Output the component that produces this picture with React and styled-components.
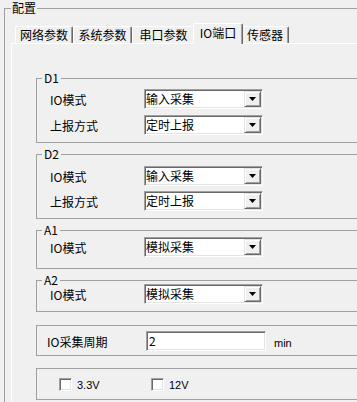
import styled, { createGlobalStyle } from "styled-components";

const GlobalStyle = createGlobalStyle`
  html, body {
    margin: 0;
    padding: 0;
    background: #f0f0f0;
    overflow: hidden;
  }

  body {
    font-family: "Noto Sans CJK SC", "Liberation Sans", sans-serif;
    font-size: 12px;
    color: #000;
  }
`;

const Window = styled.div`
  box-sizing: border-box;
  width: 357px;
  height: 402px;
  padding-left: 4px;
  overflow: hidden;
`;

const Frame = styled.fieldset`
  box-sizing: border-box;
  margin: 0;
  padding: 7px 0 0 6px;
  min-width: 0;
  height: 402px;
  border: 1px solid #a0a0a0;
  border-right: none;
  border-bottom: none;
  display: flex;
  flex-direction: column;
`;

const FrameTitle = styled.legend`
  padding: 0 1px;
  font-size: 12px;
  line-height: 16px;
`;

const TabStrip = styled.div`
  display: flex;
  align-items: flex-end;
  height: 20px;
  margin-left: 4px;
  position: relative;
  z-index: 1;
`;

const Tab = styled.div`
  box-sizing: border-box;
  flex: none;
  width: ${(p) => p.$w}px;
  height: ${(p) => (p.$active ? 21 : 17)}px;
  margin: ${(p) => (p.$active ? "0 -2px -1px" : "0")};
  position: relative;
  z-index: ${(p) => (p.$active ? 2 : 1)};
  background: #f0f0f0;
  border-top: 1px solid #fff;
  border-left: 1px solid #fff;
  border-right: 1px solid #696969;
  border-radius: 2px 2px 0 0;
  box-shadow: inset -1px 0 0 #a0a0a0;
  text-align: center;
  line-height: ${(p) => (p.$active ? 18 : 15)}px;
  white-space: nowrap;
`;

const Panel = styled.div`
  flex: 1;
  border-top: 1px solid #fff;
  border-left: 1px solid #fff;
  padding: 27px 0 0 24px;
`;

const Group = styled.fieldset`
  margin: ${(p) => p.$gap || 0}px 0 0;
  padding: 0;
  min-width: 0;
  border: 1px solid #a0a0a0;
  border-right: none;
`;

const GroupTitle = styled.legend`
  margin-left: 5px;
  padding: 0 2px;
  font-size: 12px;
  line-height: 14px;
`;

const Body = styled.div`
  display: flex;
  flex-direction: column;
  gap: ${(p) => p.$rowGap || 0}px;
  padding: ${(p) => p.$pad};
  margin-top: ${(p) => p.$pull || 0}px;
`;

const Row = styled.div`
  display: grid;
  grid-template-columns: ${(p) => p.$label}px auto auto;
  justify-content: start;
  align-items: center;
  height: 20px;
`;

const Label = styled.span`
  white-space: nowrap;
`;

const Sunken = styled.div`
  box-sizing: border-box;
  width: ${(p) => p.$w}px;
  height: 20px;
  background: #fff;
  border: 1px solid;
  border-color: #a0a0a0 #fff #fff #a0a0a0;
  box-shadow: inset 1px 1px 0 #696969, inset -1px -1px 0 #e3e3e3;
  display: flex;
  align-items: center;
  padding: 1px 1px 1px ${(p) => p.$indent || 2}px;
  line-height: 16px;
`;

const Value = styled.span`
  flex: 1;
  white-space: nowrap;
`;

const DropButton = styled.div`
  box-sizing: border-box;
  width: 17px;
  height: 16px;
  background: #f0f0f0;
  border: 1px solid;
  border-color: #e3e3e3 #696969 #696969 #e3e3e3;
  box-shadow: inset 1px 1px 0 #fff, inset -1px -1px 0 #a0a0a0;
  display: flex;
  align-items: center;
  justify-content: center;
`;

const Unit = styled.span`
  margin-left: 8px;
  padding-top: 4px;
  font-family: "Liberation Sans", sans-serif;
  font-size: 11px;
`;

const CheckRow = styled.div`
  display: flex;
  align-items: center;
  height: 13px;
`;

const CheckItem = styled.label`
  display: flex;
  align-items: center;
  gap: 5px;
  width: ${(p) => p.$w}px;
  font-family: "Liberation Sans", sans-serif;
  font-size: 11px;
`;

const CheckBox = styled.span`
  box-sizing: border-box;
  width: 13px;
  height: 13px;
  background: #fff;
  border: 1px solid;
  border-color: #a0a0a0 #fff #fff #a0a0a0;
  box-shadow: inset 1px 1px 0 #696969, inset -1px -1px 0 #e3e3e3;
`;

function Combo({ value }) {
  return (
    <Sunken $w={119} $indent={1}>
      <Value>{value}</Value>
      <DropButton>
        <svg width="7" height="4" viewBox="0 0 7 4">
          <path d="M0 0H7L3.5 4Z" fill="#000" />
        </svg>
      </DropButton>
    </Sunken>
  );
}

const tabs = [
  { name: "网络参数", w: 58 },
  { name: "系统参数", w: 59 },
  { name: "串口参数", w: 63 },
  { name: "IO端口", w: 50, active: true },
  { name: "传感器", w: 48 },
];

export default function App() {
  return (
    <>
      <GlobalStyle />
      <Window>
        <Frame>
          <FrameTitle>配置</FrameTitle>

          <TabStrip>
            {tabs.map((t) => (
              <Tab key={t.name} $w={t.w} $active={t.active}>
                {t.name}
              </Tab>
            ))}
          </TabStrip>

          <Panel>
            <Group>
              <GroupTitle>D1</GroupTitle>
              <Body $pad="4px 0 7px 13px" $rowGap={6}>
                <Row $label={94}>
                  <Label>IO模式</Label>
                  <Combo value="输入采集" />
                </Row>
                <Row $label={94}>
                  <Label>上报方式</Label>
                  <Combo value="定时上报" />
                </Row>
              </Body>
            </Group>

            <Group $gap={4}>
              <GroupTitle>D2</GroupTitle>
              <Body $pad="5px 0 7px 13px" $rowGap={5}>
                <Row $label={94}>
                  <Label>IO模式</Label>
                  <Combo value="输入采集" />
                </Row>
                <Row $label={94}>
                  <Label>上报方式</Label>
                  <Combo value="定时上报" />
                </Row>
              </Body>
            </Group>

            <Group $gap={4}>
              <GroupTitle>A1</GroupTitle>
              <Body $pad="0 0 11px 13px">
                <Row $label={94}>
                  <Label>IO模式</Label>
                  <Combo value="模拟采集" />
                </Row>
              </Body>
            </Group>

            <Group $gap={4}>
              <GroupTitle>A2</GroupTitle>
              <Body $pad="0 0 7px 13px" $pull={-3}>
                <Row $label={94}>
                  <Label>IO模式</Label>
                  <Combo value="模拟采集" />
                </Row>
              </Body>
            </Group>

            <Group $gap={13}>
              <Body $pad="5px 0 4px 10px">
                <Row $label={99}>
                  <Label>IO采集周期</Label>
                  <Sunken $w={120}>
                    <Value>2</Value>
                  </Sunken>
                  <Unit>min</Unit>
                </Row>
              </Body>
            </Group>

            <Group $gap={12}>
              <Body $pad="9px 0 8px 22px">
                <CheckRow>
                  <CheckItem $w={92}>
                    <CheckBox />
                    3.3V
                  </CheckItem>
                  <CheckItem $w={80}>
                    <CheckBox />
                    12V
                  </CheckItem>
                </CheckRow>
              </Body>
            </Group>
          </Panel>
        </Frame>
      </Window>
    </>
  );
}
